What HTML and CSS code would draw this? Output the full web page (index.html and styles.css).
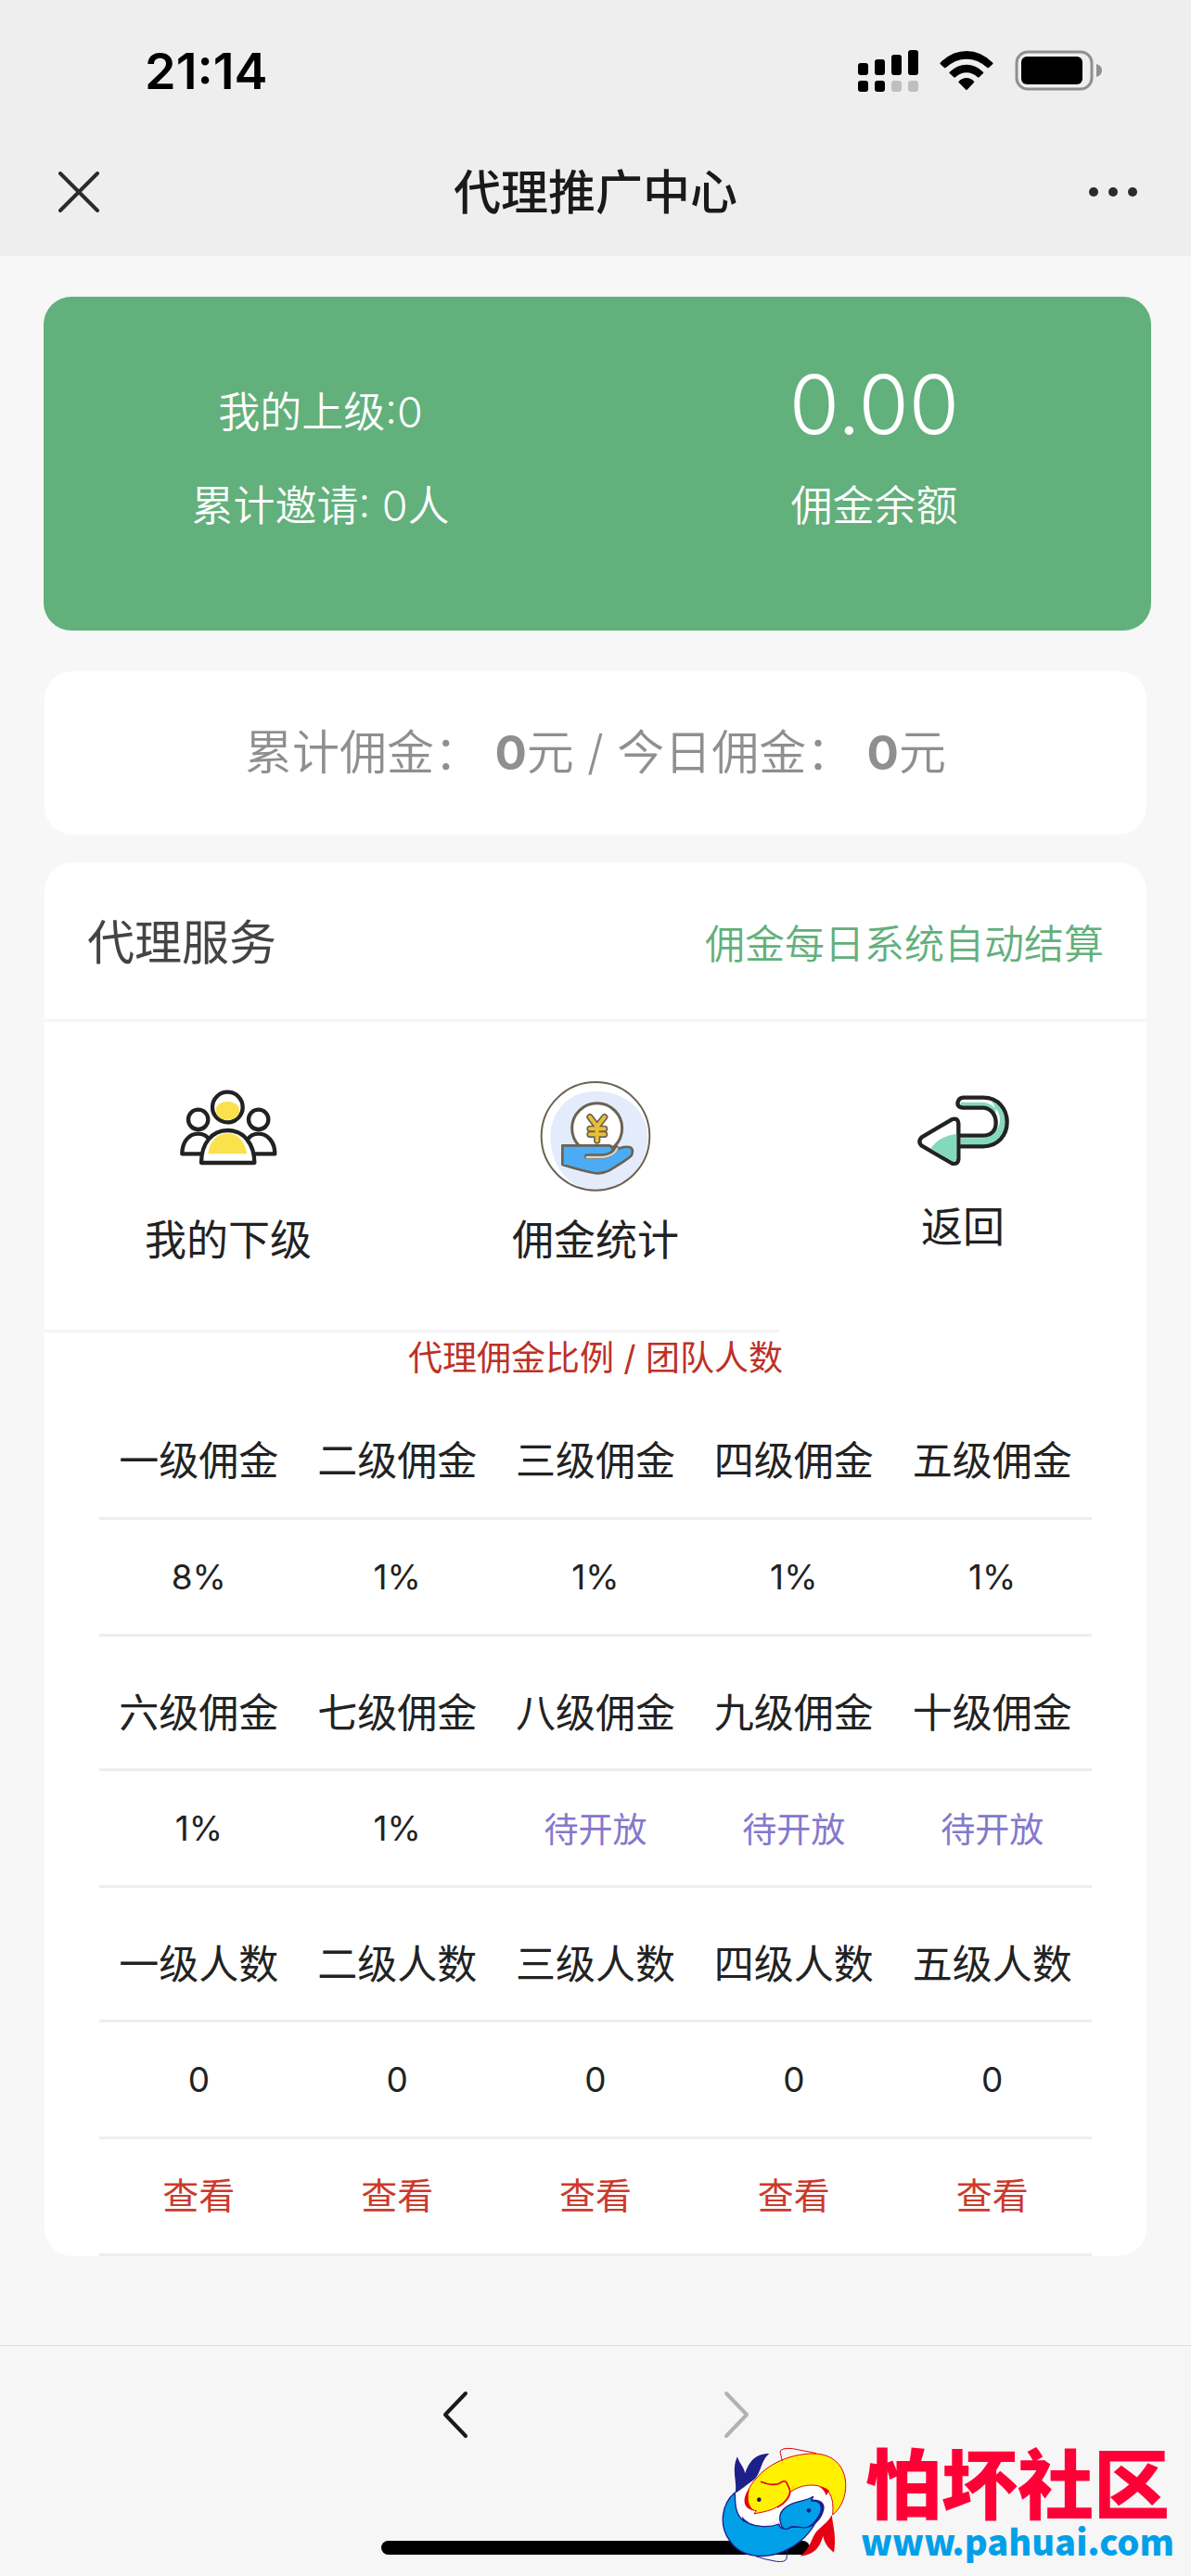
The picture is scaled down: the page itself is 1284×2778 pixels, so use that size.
FILE: index.html
```html
<!DOCTYPE html>
<html lang="zh-CN">
  <head>
    <meta charset="UTF-8">
    <meta name="viewport" content="width=device-width, initial-scale=1.0">
    <title>代理推广中心</title>
    <link rel="stylesheet" href="styles.css">
  </head>

  <body>
    <header class="top">
      <div class="status">
        <span class="time">21:14</span>
        <div class="status-icons">
          <svg width="65" height="45" viewBox="0 0 65 45">
            <rect x="0" y="14" width="11" height="13" rx="3"/>
            <rect x="18" y="10" width="11" height="17" rx="3"/>
            <rect x="36" y="5" width="11" height="22" rx="3"/>
            <rect x="54" y="0" width="11" height="27" rx="3"/>
            <rect x="0" y="33" width="11" height="12" rx="3"/>
            <rect x="18" y="33" width="11" height="12" rx="3"/>
            <rect x="36" y="33" width="11" height="12" rx="3" fill="#bfbfbf"/>
            <rect x="54" y="33" width="11" height="12" rx="3" fill="#bfbfbf"/>
          </svg>
          <svg width="58" height="42" viewBox="338 72 174 126">
            <path d="M340 110Q378 72 425 72T510 110Q512 112 510 114L497 126Q495 128 492 126Q462 98 425 98T358 126Q355 128 353 126L340 114Q338 112 340 110Z"/>
            <path d="M370 140Q395 116 425 116T479 140Q481 142 479 144L466 157Q464 159 461 157Q444 142 425 142T389 157Q386 159 384 157L370 144Q368 142 370 140Z"/>
            <path d="M400 170Q411 159 425 159T449 170Q451 172 449 174L427 197Q425 199 423 197L400 174Q398 172 400 170Z"/>
          </svg>
          <svg width="94" height="44" viewBox="0 0 94 44">
            <rect x="2" y="2" width="81" height="40" rx="12" fill="none" stroke="#8f8f8f" stroke-width="3"/>
            <rect x="7" y="7" width="66" height="30" rx="6"/>
            <path d="M88 15Q94 17 94 22T88 29Z" fill="#8f8f8f"/>
          </svg>
        </div>
      </div>
      <div class="nav">
        <button class="close" type="button" aria-label="关闭">
          <svg width="44" height="44" viewBox="0 0 44 44"><path d="M2 2L42 42M42 2L2 42" fill="none" stroke="#2b2b2b" stroke-width="4" stroke-linecap="round"/></svg>
        </button>
        <h1 class="nav-title">代理推广中心</h1>
        <button class="more" type="button" aria-label="更多">
          <svg width="54" height="12" viewBox="0 0 54 12" fill="#2b2b2b"><circle cx="6" cy="6" r="5"/><circle cx="27" cy="6" r="5"/><circle cx="48" cy="6" r="5"/></svg>
        </button>
      </div>
    </header>

    <main class="main">
      <section class="account">
        <div class="account-col">
          <p>我的上级:0</p>
          <p>累计邀请: 0人</p>
        </div>
        <div class="account-col">
          <p class="balance">0.00</p>
          <p>佣金余额</p>
        </div>
      </section>

      <section class="card total">
        <p>累计佣金： <b>0</b>元 / 今日佣金： <b>0</b>元</p>
      </section>

      <section class="card">
        <div class="card-head">
          <h2>代理服务</h2>
          <span>佣金每日系统自动结算</span>
        </div>

        <div class="services">
          <a class="service line" href="#">
            <svg width="120" height="120" viewBox="48 48 360 360" fill="#fff" stroke="#222" stroke-width="13" stroke-linejoin="round">
              <circle cx="131" cy="172" r="32"/>
              <circle cx="326" cy="172" r="32"/>
              <path d="M79 283C79 245 100 218 131 218S180 245 180 283Z"/>
              <path d="M277 283C277 245 296 218 326 218S379 245 379 283Z"/>
              <circle cx="226" cy="132" r="49"/>
              <path d="M190 150C183 125 205 114 226 114S268 125 263 150C256 181 196 181 190 150Z" fill="#fbe14b" stroke="none"/>
              <path d="M141 312C141 250 175 207 226 207S313 250 313 312Z"/>
              <path d="M163 283C167 245 190 217 226 217S281 245 289 283Z" fill="#fbe14b" stroke="none"/>
            </svg>
            <span>我的下级</span>
          </a>
          <a class="service line" href="#">
            <svg width="120" height="120" viewBox="66 78 360 360" stroke="#6a6253" stroke-width="7" stroke-linejoin="round">
              <circle cx="246" cy="256" r="174" fill="#fff" stroke="none"/>
              <path d="M103 290C85 180 160 108 250 110C350 112 420 180 415 270C410 360 330 430 246 430C170 428 115 370 103 290Z" fill="#e4ecfb" stroke="none"/>
              <circle cx="246" cy="256" r="175" fill="none" stroke-width="6"/>
              <circle cx="251" cy="230" r="81" fill="#fff" stroke-width="9"/>
              <g fill="none" stroke-linecap="round">
                <path d="M228 194L251 224L275 194M251 224V270M228 232H275M228 250H275" stroke-width="22"/>
                <path d="M228 194L251 224L275 194M251 224V270M228 232H275M228 250H275" stroke="#eabf35" stroke-width="12"/>
              </g>
              <path d="M139 286H290Q304 288 302 303L326 294Q350 287 361 293Q370 301 362 319Q345 335 290 367Q266 379 242 375Q200 367 139 348Z" fill="#4bacf5" stroke-width="8"/>
              <path d="M218 321H270Q304 318 312 292" fill="none" stroke-width="16" stroke-linecap="round"/>
              <path d="M218 324H270Q306 320 316 296" fill="none" stroke="#d9d7cd" stroke-width="7" stroke-linecap="round"/>
            </svg>
            <span>佣金统计</span>
          </a>
          <a class="service" href="#">
            <svg width="120" height="106" viewBox="24 18 360 318" fill="none" stroke="#222" stroke-width="13" stroke-linejoin="round">
              <path d="M190 194H272C298 192 311 175 311 152S298 108 272 104H205C188 104 184 91 190 80Q195 71 207 71H270C320 71 347 110 347 150S320 229 270 229H190Z" fill="#fff" stroke="none"/>
              <path d="M197 100V86H270Q300 90 317 115C335 150 318 190 272 202H197V225H270C318 224 341 190 341 150Q338 100 295 80Q318 110 308 125Q298 106 272 100Z" fill="#83d9bd" stroke="none"/>
              <path d="M190 194H272C298 192 311 175 311 152S298 108 272 104H205C188 104 184 91 190 80Q195 71 207 71H270C320 71 347 110 347 150S320 229 270 229H190"/>
              <path d="M70 200L168 142Q188 134 190 155V270Q188 290 168 283L70 226Q58 213 70 200Z" fill="#fff"/>
              <path d="M100 236Q128 195 184 188V268Q182 281 170 277Z" fill="#83d9bd" stroke="none"/>
            </svg>
            <span>返回</span>
          </a>
        </div>

        <h3 class="rate-title">代理佣金比例 / 团队人数</h3>
        <table class="rates">
          <tr><th>一级佣金</th><th>二级佣金</th><th>三级佣金</th><th>四级佣金</th><th>五级佣金</th></tr>
          <tr><td>8%</td><td>1%</td><td>1%</td><td>1%</td><td>1%</td></tr>
          <tr><th>六级佣金</th><th>七级佣金</th><th>八级佣金</th><th>九级佣金</th><th>十级佣金</th></tr>
          <tr><td>1%</td><td>1%</td><td class="soon">待开放</td><td class="soon">待开放</td><td class="soon">待开放</td></tr>
          <tr><th>一级人数</th><th>二级人数</th><th>三级人数</th><th>四级人数</th><th>五级人数</th></tr>
          <tr><td>0</td><td>0</td><td>0</td><td>0</td><td>0</td></tr>
          <tr>
            <td><a href="#">查看</a></td>
            <td><a href="#">查看</a></td>
            <td><a href="#">查看</a></td>
            <td><a href="#">查看</a></td>
            <td><a href="#">查看</a></td>
          </tr>
        </table>
      </section>
    </main>

    <footer class="bottom">
      <div class="pager">
        <button type="button" aria-label="后退">
          <svg width="28" height="52" viewBox="0 0 28 52"><path d="M25 3L3 26L25 49" fill="none" stroke="#1a1a1a" stroke-width="4" stroke-linecap="round" stroke-linejoin="round"/></svg>
        </button>
        <button type="button" aria-label="前进" disabled>
          <svg width="28" height="52" viewBox="0 0 28 52"><path d="M3 3L25 26L3 49" fill="none" stroke="#b2b2b2" stroke-width="4" stroke-linecap="round" stroke-linejoin="round"/></svg>
        </button>
      </div>
      <div class="home-bar"></div>

      <div class="watermark">
        <svg width="136" height="128" viewBox="60 114 408 384" stroke-linejoin="round">
          <!-- white gap between the two fish -->
          <path d="M165 215C110 250 98 300 115 335C140 380 200 375 245 350L350 290L390 300C395 340 360 385 320 415C370 400 410 370 420 330C430 280 400 235 340 232C290 230 260 260 250 275Z" fill="#fff"/>
          <!-- blue fish -->
          <path d="M104 266C112 232 90 190 111 148C116 168 131 180 136 202C148 165 168 138 214 138C182 165 190 205 160 226C140 240 124 255 104 266Z" fill="#1d2088"/>
          <path d="M103 264C60 300 50 370 85 418C120 475 200 482 265 452C315 430 350 390 365 358C340 378 300 375 286 376C270 384 250 386 245 366C215 378 160 378 128 352C105 335 103 300 103 264Z" fill="#00a0e9" stroke="#1d2088" stroke-width="4"/>
          <path d="M250 360C240 325 270 305 300 296C325 290 345 285 356 277L350 290C378 290 392 302 384 325C376 348 354 372 334 377C310 380 295 368 280 377C265 388 254 380 250 360Z" fill="#00a0e9" stroke="#1d2088" stroke-width="4"/>
          <path d="M350 287C385 285 400 303 388 330C380 352 362 370 342 378C362 355 380 335 380 315C380 298 370 293 350 293Z" fill="#1d2088"/>
          <path d="M126 340Q132 352 148 360L128 358Z" fill="#1d2088"/>
          <path d="M272 447L270 478Q266 490 238 487Q200 481 170 470" fill="none" stroke="#1d2088" stroke-width="3"/>
          <!-- yellow fish -->
          <path d="M416 336C420 370 432 410 423 458C408 445 392 430 388 404C378 440 360 466 314 469C350 445 350 405 372 385C390 368 408 355 416 336Z" fill="#e60012"/>
          <path d="M150 248C190 180 270 138 360 138C430 140 465 190 461 250C458 290 440 320 419 336C422 300 418 270 398 254C370 234 320 234 280 264C276 284 254 306 224 318C205 326 185 328 165 333L172 323C140 318 135 285 150 248Z" fill="#fff100" stroke="#e60012" stroke-width="3"/>
          <path d="M186 229C210 240 240 242 254 230C270 220 272 238 280 254C286 275 264 300 240 312" fill="none" stroke="#e60012" stroke-width="5"/>
          <path d="M150 250C130 275 122 315 165 323C146 310 142 285 150 250Z" fill="#e60012"/>
          <path d="M376 246Q392 254 398 274L408 258Q396 246 376 246Z" fill="#e60012"/>
          <path d="M256 162L249 132Q252 118 290 122L366 137" fill="none" stroke="#e60012" stroke-width="3"/>
          <circle cx="181" cy="287" r="7" fill="#1d2050"/>
          <circle cx="342" cy="322" r="7" fill="#1d2088"/>
        </svg>
        <div class="watermark-text">
          <strong>怕坏社区</strong>
          <span>www.pahuai.com</span>
        </div>
      </div>
    </footer>
  </body>
</html>
```
FILE: styles.css
```css
* {
  box-sizing: border-box;
  margin: 0;
  padding: 0;
}

body {
  display: flex;
  flex-direction: column;
  min-height: 100vh;
  background-color: #f7f7f7;
  font-family: Inter, 'Noto Sans CJK SC', sans-serif;
  color: #222;
}

button {
  display: flex;
  border: none;
  background: none;
  cursor: pointer;
}

a {
  color: inherit;
  text-decoration: none;
}

svg {
  display: block;
  flex: none;
}

/* status bar + title bar */
.top {
  background-color: #eee;
}

.status {
  display: flex;
  align-items: center;
  justify-content: space-between;
  height: 138px;
  padding: 14px 96px 0 156px;
}

.time {
  font-size: 54px;
  font-weight: 600;
  color: #000;
}

.status-icons {
  display: flex;
  align-items: center;
  gap: 23px;
}

.nav {
  display: grid;
  grid-template-columns: 1fr auto 1fr;
  align-items: center;
  height: 138px;
  padding: 0 57px;
}

.close {
  justify-self: start;
  margin-left: 6px;
}

.more {
  justify-self: end;
}

.nav-title {
  padding-top: 2px;
  font-size: 51px;
  font-weight: 500;
  line-height: 72px;
  color: #1a1a1a;
}

.main {
  flex: 1;
  padding: 44px 48px 96px;
}

.account {
  display: grid;
  grid-template-columns: 1fr 1fr;
  height: 360px;
  margin: 0 -5px 44px -1px;
  padding-top: 74px;
  border-radius: 30px;
  background-color: #62b07b;
  color: #fff;
  font-size: 45px;
  font-weight: 350;
  line-height: 101px;
  text-align: center;
}

.balance {
  margin-bottom: 17px;
  font-size: 88px;
  line-height: 84px;
}

.card {
  margin-bottom: 30px;
  border-radius: 30px;
  background-color: #fff;
}

.card:last-child {
  margin-bottom: 0;
}

.total {
  padding: 50px 0;
  font-size: 51px;
  font-weight: 350;
  line-height: 76px;
  text-align: center;
  color: #8f8f8f;
}

.total b {
  font-weight: 700;
}

.card-head {
  display: flex;
  align-items: center;
  justify-content: space-between;
  height: 172px;
  padding: 0 46px;
  border-bottom: 3px solid #f5f5f5;
}

.card-head h2 {
  padding-bottom: 4px;
  font-size: 51px;
  font-weight: 400;
  color: #444;
}

.card-head span {
  font-size: 43px;
  font-weight: 350;
  color: #62b07b;
}

.services {
  display: grid;
  grid-template-columns: repeat(3, 1fr);
}

.service {
  display: flex;
  flex-direction: column;
  align-items: center;
  gap: 20px;
  padding: 64px 0;
  font-size: 45px;
  line-height: 64px;
}

.line {
  border-bottom: 3px solid #f5f5f5;
}

.rate-title {
  font-size: 37px;
  font-weight: 400;
  line-height: 55px;
  text-align: center;
  color: #bd3124;
}

.rates {
  width: 90%;
  margin: 0 auto;
  border-collapse: collapse;
  table-layout: fixed;
}

.rates th,
.rates td {
  height: 126px;
  border-bottom: 3px solid #eee;
  text-align: center;
  vertical-align: middle;
  font-size: 37px;
  font-weight: 400;
}

.rates th {
  height: 145px;
  padding-top: 16px;
  font-size: 43px;
}

.rates a {
  display: block;
  padding-bottom: 6px;
  font-size: 39px;
  color: #cb3a2c;
}

.rates .soon {
  color: #8478cc;
}

/* browser toolbar */
.bottom {
  position: relative;
  padding-bottom: 24px;
  border-top: 1px solid #dedede;
  background-color: #f6f6f6;
}

.pager {
  display: flex;
  justify-content: center;
  gap: 275px;
  padding: 48px 0 110px;
}

.home-bar {
  width: 36%;
  height: 15px;
  margin: 0 auto;
  border-radius: 8px;
  background-color: #000;
}

.watermark {
  position: absolute;
  right: 18px;
  bottom: 12px;
  display: flex;
  align-items: center;
  gap: 14px;
}

.watermark-text {
  display: flex;
  flex-direction: column;
  align-items: center;
}

.watermark strong {
  font-family: 'Noto Sans CJK SC', sans-serif;
  font-size: 82px;
  font-weight: 900;
  line-height: 76px;
  color: #ff0036;
}

.watermark span {
  font-family: 'Noto Sans CJK SC', sans-serif;
  font-size: 38px;
  font-weight: 900;
  line-height: 54px;
  color: #00a0e9;
}
```
